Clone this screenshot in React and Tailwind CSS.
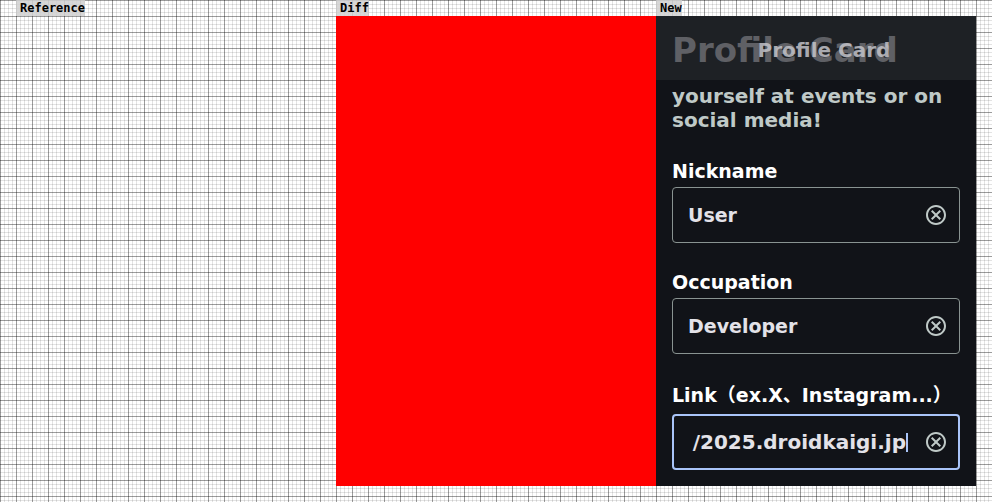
import { useState } from "react";
import { MdOutlineCancel } from "react-icons/md";

function Panel({ title, children }) {
  return (
    <section className="flex min-w-0 flex-1 flex-col">
      <h2 className="h-4 w-fit bg-[#d0d0d0]/85 pl-1 font-['DejaVu_Sans_Mono',monospace] text-[12px] leading-4 font-bold text-black">
        {title}
      </h2>
      <div className="flex flex-1 flex-col">{children}</div>
    </section>
  );
}

function Field({ id, label, initial, active = false }) {
  const [value, setValue] = useState(initial);
  return (
    <div className="flex flex-col">
      <label
        htmlFor={id}
        className={
          active
            ? "pb-1 text-[19px] leading-[29px] font-bold whitespace-nowrap text-white"
            : "pb-1 text-[19px] leading-6 font-bold whitespace-nowrap text-white"
        }
      >
        {label}
      </label>
      <div
        className={
          active
            ? "flex h-14 items-center rounded-sm border-2 border-[#a9c4f8] pr-[10px] pl-[14px]"
            : "flex h-14 items-center rounded-sm border border-[#899391] pr-[11px] pl-[15px]"
        }
      >
        <div className="flex min-w-0 flex-1 items-center">
          <input
            id={id}
            value={value}
            onChange={(e) => setValue(e.target.value)}
            className={
              active
                ? "w-0 min-w-0 flex-1 bg-transparent text-right text-[20px] leading-6 font-bold text-[#e3e2e8] outline-none"
                : "w-0 min-w-0 flex-1 bg-transparent text-[19px] leading-6 font-bold text-[#e3e2e8] outline-none"
            }
          />
          {active && <span className="h-[19px] w-0.5 shrink-0 bg-[#a9c4f8]" />}
        </div>
        <button
          type="button"
          aria-label="Clear"
          onClick={() => setValue("")}
          className="ml-4 flex size-6 items-center justify-center text-[#bfc9c7]"
        >
          <MdOutlineCancel className="size-6" />
        </button>
      </div>
    </div>
  );
}

function ProfileCard() {
  return (
    <div className="flex flex-1 flex-col bg-[#111318] font-['DejaVu_Sans','Noto_Sans_CJK_JP',sans-serif]">
      <header className="grid h-16 items-center bg-[#1e2125] px-4 pt-1 font-bold">
        <h1 className="col-start-1 row-start-1 text-[34px] leading-10 whitespace-nowrap text-[#5f6065]">Profile Card</h1>
        <p className="col-start-1 row-start-1 pl-4 text-center text-[20px] leading-6 whitespace-nowrap text-[#c4c4ca]/85">
          Profile Card
        </p>
      </header>
      <div className="flex flex-col px-4 pt-1 pb-4">
        <p className="text-[20px] leading-6 font-bold text-[#bfc9c7]">
          yourself at events or on social media!
        </p>
        <div className="flex flex-col gap-[27px] pt-[27px]">
          <Field id="nickname" label="Nickname" initial="User" />
          <Field id="occupation" label="Occupation" initial="Developer" />
          <Field id="link" label="Link（ex.X、Instagram...）" initial="/2025.droidkaigi.jp" active />
        </div>
      </div>
    </div>
  );
}

export default function App() {
  return (
    <main className="flex min-h-screen bg-white bg-[linear-gradient(to_right,#00000050_1px,transparent_1px),linear-gradient(#00000050_1px,transparent_1px),linear-gradient(to_right,#0000001c_1px,transparent_1px),linear-gradient(#0000001c_1px,transparent_1px)] bg-[length:16px_16px,16px_16px,4px_4px,4px_4px] px-4 pb-4">
      <Panel title="Reference" />
      <Panel title="Diff">
        <div className="flex-1 bg-[#ff0000]" />
      </Panel>
      <Panel title="New">
        <ProfileCard />
      </Panel>
    </main>
  );
}
